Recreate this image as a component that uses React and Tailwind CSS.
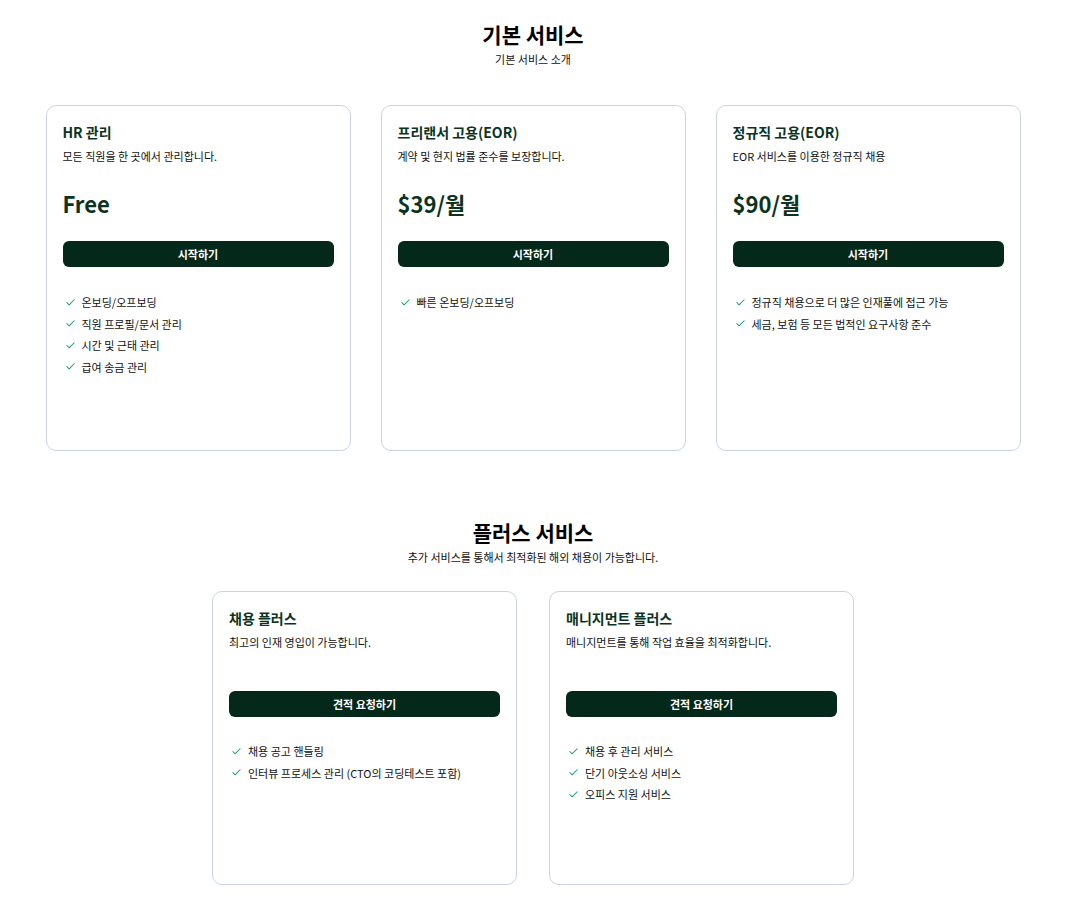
import { Check } from "lucide-react"

const basic = [
  {
    title: "HR 관리",
    desc: "모든 직원을 한 곳에서 관리합니다.",
    price: "Free",
    features: ["온보딩/오프보딩", "직원 프로필/문서 관리", "시간 및 근태 관리", "급여 송금 관리"],
  },
  {
    title: "프리랜서 고용(EOR)",
    desc: "계약 및 현지 법률 준수를 보장합니다.",
    price: "$39/월",
    features: ["빠른 온보딩/오프보딩"],
  },
  {
    title: "정규직 고용(EOR)",
    desc: "EOR 서비스를 이용한 정규직 채용",
    price: "$90/월",
    features: ["정규직 채용으로 더 많은 인재풀에 접근 가능", "세금, 보험 등 모든 법적인 요구사항 준수"],
  },
]

const plus = [
  {
    title: "채용 플러스",
    desc: "최고의 인재 영입이 가능합니다.",
    features: ["채용 공고 핸들링", "인터뷰 프로세스 관리 (CTO의 코딩테스트 포함)"],
  },
  {
    title: "매니지먼트 플러스",
    desc: "매니지먼트를 통해 작업 효율을 최적화합니다.",
    features: ["채용 후 관리 서비스", "단기 아웃소싱 서비스", "오피스 지원 서비스"],
  },
]

function Features({ items }) {
  return (
    <ul className="flex flex-col gap-[5px]">
      {items.map((f) => (
        <li key={f} className="flex items-center gap-[6px] text-[11px] leading-[16.5px] text-[#111]">
          <Check size={11} strokeWidth={2.25} className="text-[#1b9a7c] shrink-0 ml-[2px]" />
          <span>{f}</span>
        </li>
      ))}
    </ul>
  )
}

function Card({ plan, plusCard }) {
  return (
    <div
      className={`w-[305px] rounded-[10px] border border-[#c9d4df] bg-white px-4 pt-[15px] ${
        plusCard ? "h-[294px]" : "h-[346px]"
      }`}
    >
      <h3 className="text-[14px] leading-[22px] font-bold text-[#0b3320]">{plan.title}</h3>
      <p className="mt-[5px] text-[11px] leading-[16px] text-[#111]">{plan.desc}</p>
      {plusCard ? (
        <div className="h-[33px]" />
      ) : (
        <div className="mt-[24px] text-[22px] leading-[30px] font-bold text-[#0b3320]">{plan.price}</div>
      )}
      <button
        className={`w-full h-[26px] rounded-[6px] bg-[#04281a] text-white text-[11px] font-bold ${
          plusCard ? "mt-[8px]" : "mt-[23px]"
        }`}
      >
        {plusCard ? "견적 요청하기" : "시작하기"}
      </button>
      <div className={plusCard ? "mt-[26px]" : "mt-[27px]"}>
        <Features items={plan.features} />
      </div>
    </div>
  )
}

function SectionHeader({ title, sub }) {
  return (
    <div className="text-center">
      <h2 className="text-[21px] leading-[30px] font-bold text-black">{title}</h2>
      <p className="mt-[2px] text-[11px] leading-[16px] text-[#111]">{sub}</p>
    </div>
  )
}

export default function App() {
  return (
    <div
      className="min-h-screen bg-white pr-[6px] pt-[19px]"
      style={{ fontFamily: '"Noto Sans CJK KR", "Noto Sans", sans-serif' }}
    >
      <SectionHeader title="기본 서비스" sub="기본 서비스 소개" />
      <div className="mt-[38px] flex justify-center gap-[30px]">
        {basic.map((p) => (
          <Card key={p.title} plan={p} />
        ))}
      </div>

      <div className="mt-[66px]">
        <SectionHeader title="플러스 서비스" sub="추가 서비스를 통해서 최적화된 해외 채용이 가능합니다." />
      </div>
      <div className="mt-[26px] flex justify-center gap-[32px] pb-[14px]">
        {plus.map((p) => (
          <Card key={p.title} plan={p} plusCard />
        ))}
      </div>
    </div>
  )
}
